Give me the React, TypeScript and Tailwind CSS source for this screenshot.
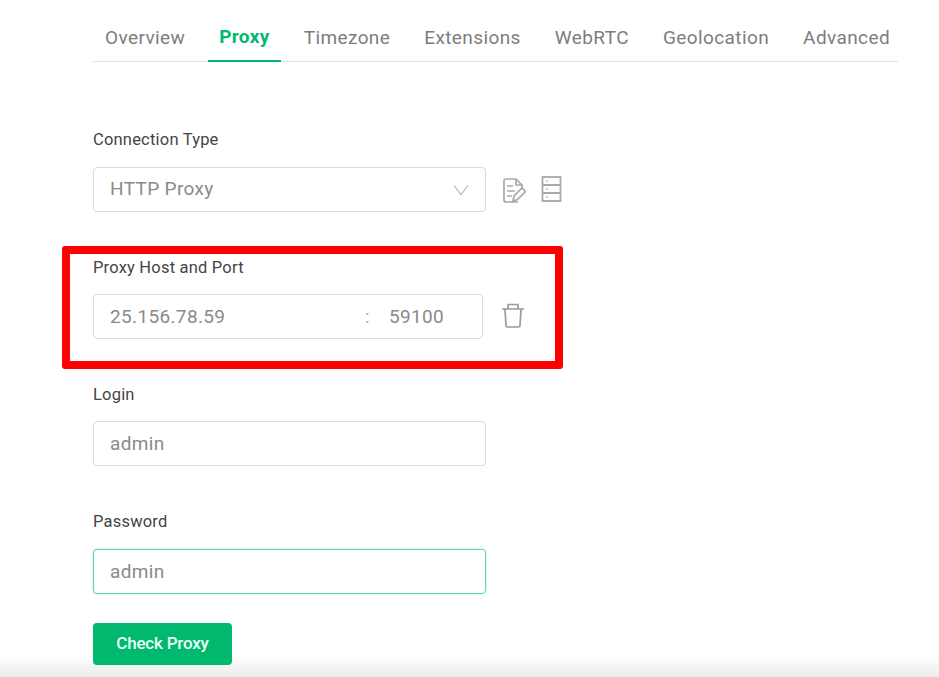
import React from 'react';

const tabs = ['Overview', 'Proxy', 'Timezone', 'Extensions', 'WebRTC', 'Geolocation', 'Advanced'];

function Field({ label, value, focused }: { label: string; value: string; focused?: boolean }) {
  return (
    <div className="flex flex-col">
      <label className="h-[20px] text-[16.5px] leading-[22px] tracking-[0.2px] text-[#444444]">{label}</label>
      <div
        className={
          focused
            ? 'mt-[18px] flex h-[45px] w-[393px] items-center rounded-[4px] border border-[#5ed6a2] pl-[16px] pt-[2px] text-[19px] tracking-[0.35px] text-[#8a8a8a] shadow-[0_0_3px_rgba(0,184,112,0.3)]'
            : 'mt-[17px] flex h-[45px] w-[393px] items-center rounded-[4px] border border-[#dadada] pl-[16px] pt-[2px] text-[19px] tracking-[0.35px] text-[#8a8a8a]'
        }
      >
        {value}
      </div>
    </div>
  );
}

export default function App() {
  return (
    <div className="relative h-[677px] w-[939px] overflow-hidden bg-white pl-[93px] font-['Roboto',sans-serif]">
      {/* soft fade along the bottom edge of the capture, behind the button */}
      <div className="absolute bottom-0 left-0 h-[22px] w-full bg-gradient-to-b from-transparent to-[#ececec]" />

      <nav className="flex h-[62px] w-[805px] gap-[12px] border-b border-[#e4e4e4] pl-[1px] text-[19px] tracking-[0.4px]">
        {tabs.map((tab) => (
          <div
            key={tab}
            className={
              tab === 'Proxy'
                ? 'relative top-[1px] flex h-[61px] items-center border-b-2 border-[#00b96f] px-[11px] pt-[14px] font-bold tracking-[0.35px] text-[#00b96f]'
                : 'flex h-[61px] items-center px-[11px] pt-[15px] text-[#7d7d7d]'
            }
          >
            {tab}
          </div>
        ))}
      </nav>

      <div className="relative mt-[67px] flex flex-col">
        <div className="flex flex-col">
          <label className="h-[20px] text-[16.5px] leading-[22px] tracking-[0.2px] text-[#444444]">Connection Type</label>
          <div className="mt-[18px] flex items-center">
            <div className="flex h-[45px] w-[393px] items-center justify-between rounded-[4px] border border-[#dadada] px-[16px] text-[19px] tracking-[0.35px] text-[#8a8a8a]">
              <span>HTTP Proxy</span>
              <svg width="16" height="12" viewBox="0 0 16 12" fill="none" stroke="#b5b5b5" strokeWidth="1.2">
                <path d="M1 1.5l7 9 7-9" />
              </svg>
            </div>
            <svg className="ml-[16px] mt-[2px]" width="24" height="28" viewBox="0 0 24 28" fill="none" stroke="#a8a8a8" strokeWidth="1.7">
              <path d="M16 25H4q-2 0-2-2V4q0-2 2-2h10l6 6v3" />
              <path d="M14 2v6h6M5 9h6M5 14h8M5 19h5" />
              <path d="M11 24l1-5 8-8 3.5 3.5-8 8z" />
            </svg>
            <svg className="ml-[15px] mb-[2px]" width="21" height="26" viewBox="0 0 21 26" fill="none" stroke="#a8a8a8" strokeWidth="1.8">
              <rect x="1.5" y="1" width="18" height="24" />
              <path d="M1.5 9h18M1.5 17h18" />
              <path d="M5 5h2M5 13h2M5 21h2" strokeWidth="1.2" />
            </svg>
          </div>
        </div>

        <div className="mt-[45px] flex flex-col">
          <label className="h-[20px] text-[16.5px] leading-[22px] tracking-[0.2px] text-[#444444]">Proxy Host and Port</label>
          <div className="mt-[17px] flex items-center">
            <div className="flex h-[45px] w-[390px] items-center rounded-[4px] border border-[#dadada] pl-[16px] pt-[2px] text-[19px] tracking-[0.35px] text-[#8a8a8a]">
              <span className="w-[255px]">25.156.78.59</span>
              <span className="w-[24px] text-[#b0b0b0]">:</span>
              <span>59100</span>
            </div>
            <svg className="ml-[18px] mb-[2px]" width="24" height="25" viewBox="0 0 24 25" fill="none" stroke="#9a9a9a" strokeWidth="1.7">
              <path d="M1 6h22M7 6V1.5h10V6" />
              <path d="M4 6l1 16.5q0 1.5 1.5 1.5h11q1.5 0 1.5-1.5L20 6" />
            </svg>
          </div>
        </div>

        <div className="mt-[45px]">
          <Field label="Login" value="admin" />
        </div>
        <div className="mt-[45px]">
          <Field label="Password" value="admin" focused />
        </div>

        <button className="mt-[29px] h-[42px] w-[139px] rounded-[4px] bg-[#00b96f] text-[17px] font-medium tracking-[-0.2px] text-[#eafff5]">
          Check Proxy
        </button>
      </div>

      {/* annotation drawn over the form */}
      <div className="absolute left-[62px] top-[246px] h-[123px] w-[501px] rounded-[3px] border-[8px] border-[#ff0000]" />
    </div>
  );
}
